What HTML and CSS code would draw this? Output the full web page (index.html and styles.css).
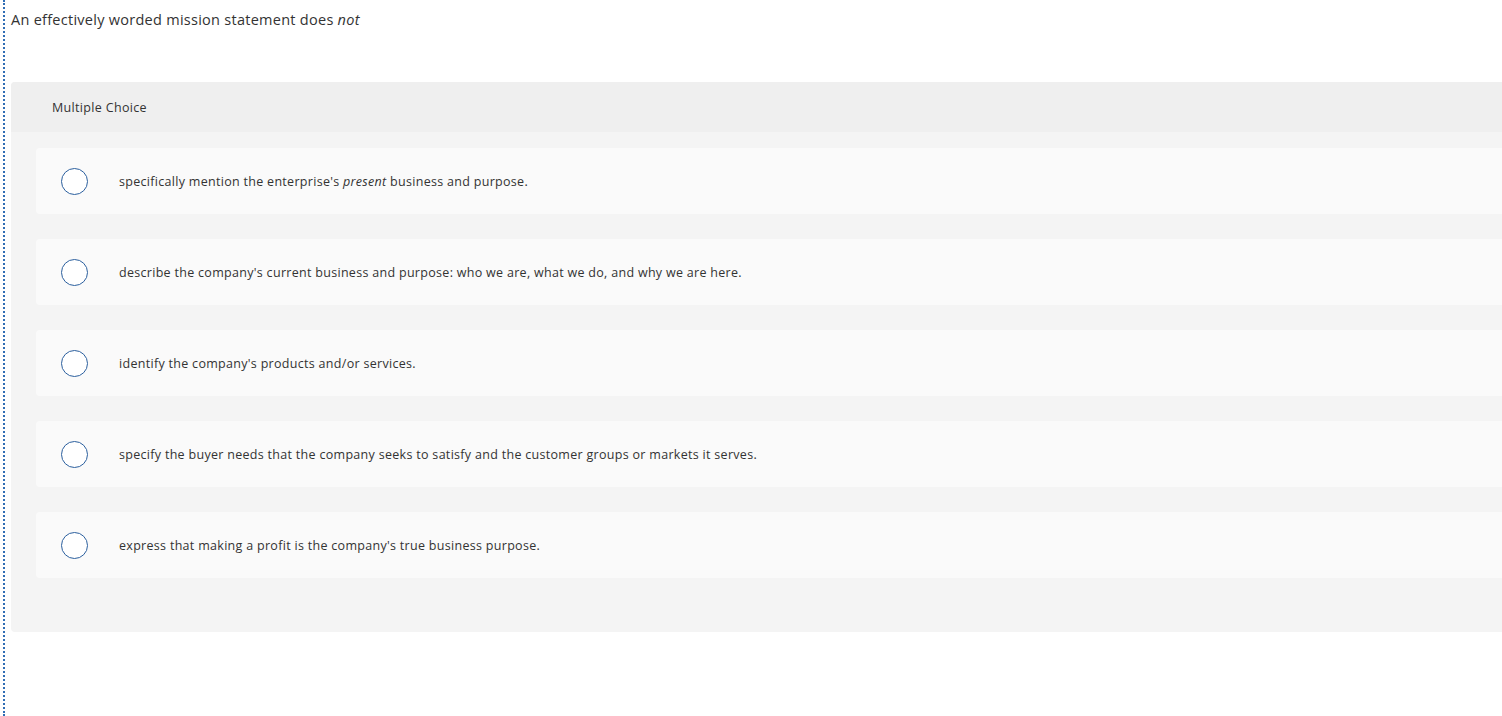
FILE: index.html
```html
<!DOCTYPE html>
<html>
<head>
<meta charset="utf-8">
<link rel="stylesheet" href="styles.css">
</head>
<body>
<div class="page">
  <p class="question">An effectively worded mission statement does <em>not</em></p>
  <div class="mc">
    <div class="mc-head">Multiple Choice</div>
    <div class="mc-body">
      <div class="opt"><span class="radio"></span><span class="label">specifically mention the enterprise's <em>present</em> business and purpose.</span></div>
      <div class="opt"><span class="radio"></span><span class="label">describe the company's current business and purpose: who we are, what we do, and why we are here.</span></div>
      <div class="opt"><span class="radio"></span><span class="label">identify the company's products and/or services.</span></div>
      <div class="opt"><span class="radio"></span><span class="label">specify the buyer needs that the company seeks to satisfy and the customer groups or markets it serves.</span></div>
      <div class="opt"><span class="radio"></span><span class="label">express that making a profit is the company's true business purpose.</span></div>
    </div>
  </div>
</div>
</body>
</html>
```
FILE: styles.css
```css
html, body {
  margin: 0;
  padding: 0;
  background: #ffffff;
}
body {
  font-family: "Open Sans", Lato, "Liberation Sans", sans-serif;
  color: #333333;
  overflow: hidden;
}
.page {
  margin-left: 3px;
  border-left: 2px dotted #2f6db5;
  padding-left: 6px;
  min-height: 100vh;
  box-sizing: border-box;
  padding-top: 10px;
}
.question {
  margin: 0;
  font-size: 14.5px;
  line-height: 20px;
  letter-spacing: 0.27px;
  color: #333333;
}
.question em { font-style: italic; }
.mc {
  margin-top: 52px;
  background: #f4f4f4;
  border-radius: 4px 0 0 4px;
}
.mc-head {
  height: 50px;
  background: #efefef;
  border-radius: 4px 0 0 0;
  display: flex;
  align-items: center;
  padding-left: 41px;
  font-size: 12.5px;
  letter-spacing: 0.33px;
  color: #333333;
}
.mc-body {
  padding: 16px 0 54px 25px;
  display: flex;
  flex-direction: column;
  gap: 25px;
}
.opt {
  height: 66px;
  background: #fafafa;
  border-radius: 4px 0 0 4px;
  display: flex;
  align-items: center;
  padding-left: 25px;
}
.radio {
  width: 25px;
  height: 25px;
  border: 1.5px solid #2b5f9e;
  border-radius: 50%;
  background: #ffffff;
  flex: none;
}
.label {
  margin-left: 31px;
  font-size: 12.5px;
  letter-spacing: 0.3px;
  color: #333333;
}
```
